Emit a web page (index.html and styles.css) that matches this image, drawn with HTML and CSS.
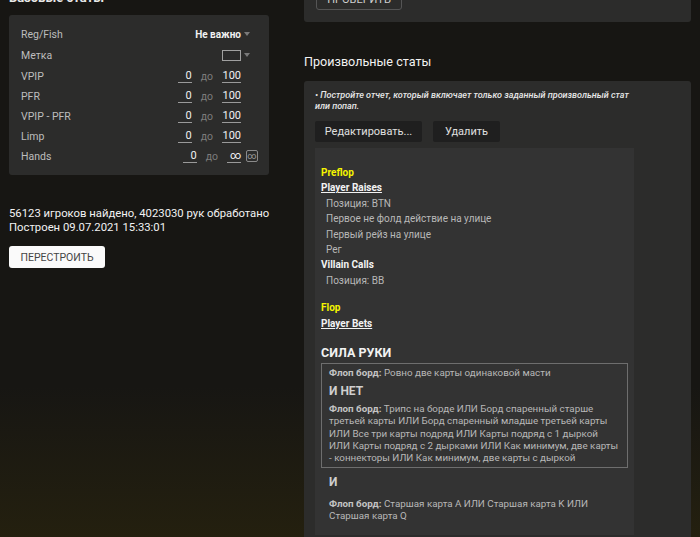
FILE: index.html
```html
<!DOCTYPE html>
<html lang="ru">
<head>
<meta charset="utf-8">
<title>Статы</title>
<link rel="stylesheet" href="styles.css">
</head>
<body>
<div class="page">
  <div class="left">
    <div class="h-cut">Базовые статы</div>
    <div class="panel">
      <div class="row first">
        <span class="lbl">Reg/Fish</span>
        <span class="sel">Не важно</span>
        <span class="slot"><span class="tri"></span></span>
      </div>
      <div class="row tall">
        <span class="lbl">Метка</span>
        <span class="swatch"></span>
        <span class="slot"><span class="tri"></span></span>
      </div>
      <div class="row">
        <span class="lbl">VPIP</span>
        <span class="num n-min">0</span><span class="to">до</span><span class="num n-max">100</span>
        <span class="slot"></span>
      </div>
      <div class="row">
        <span class="lbl">PFR</span>
        <span class="num n-min">0</span><span class="to">до</span><span class="num n-max">100</span>
        <span class="slot"></span>
      </div>
      <div class="row">
        <span class="lbl">VPIP - PFR</span>
        <span class="num n-min">0</span><span class="to">до</span><span class="num n-max">100</span>
        <span class="slot"></span>
      </div>
      <div class="row">
        <span class="lbl">Limp</span>
        <span class="num n-min">0</span><span class="to">до</span><span class="num n-max">100</span>
        <span class="slot"></span>
      </div>
      <div class="row">
        <span class="lbl">Hands</span>
        <span class="num n-min">0</span><span class="to">до</span><span class="num n-inf">∞</span>
        <span class="slot"><span class="inf-btn">∞</span></span>
      </div>
    </div>
    <div class="summary">
      <div>56123 игроков найдено, 4023030 рук обработано</div>
      <div>Построен 09.07.2021 15:33:01</div>
    </div>
    <button class="rebuild">ПЕРЕСТРОИТЬ</button>
  </div>

  <div class="right">
    <div class="panel-top">
      <button class="check">ПРОВЕРИТЬ</button>
    </div>
    <div class="h2">Произвольные статы</div>
    <div class="panel2">
      <div class="note">• Постройте отчет, который включает только заданный произвольный стат или попап.</div>
      <div class="btns">
        <button class="dark-btn edit">Редактировать...</button>
        <button class="dark-btn del">Удалить</button>
      </div>
      <div class="stat">
        <div class="street">Preflop</div>
        <div class="actor">Player Raises</div>
        <div class="item">Позиция: BTN</div>
        <div class="item">Первое не фолд действие на улице</div>
        <div class="item">Первый рейз на улице</div>
        <div class="item">Рег</div>
        <div class="actor plain">Villain Calls</div>
        <div class="item">Позиция: BB</div>
        <div class="street gap">Flop</div>
        <div class="actor">Player Bets</div>
        <div class="strength">СИЛА РУКИ</div>
        <div class="cond-box">
          <div class="cond"><b>Флоп борд:</b> Ровно две карты одинаковой масти</div>
          <div class="op">И НЕТ</div>
          <div class="cond"><b>Флоп борд:</b> Трипс на борде ИЛИ Борд спаренный старше<br>третьей карты ИЛИ Борд спаренный младше третьей карты<br>ИЛИ Все три карты подряд ИЛИ Карты подряд с 1 дыркой<br>ИЛИ Карты подряд с 2 дырками ИЛИ Как минимум, две карты<br>- коннекторы ИЛИ Как минимум, две карты с дыркой</div>
        </div>
        <div class="op outer">И</div>
        <div class="cond outer-cond"><b>Флоп борд:</b> Старшая карта A ИЛИ Старшая карта K ИЛИ<br>Старшая карта Q</div>
      </div>
    </div>
  </div>
</div>
</body>
</html>
```

FILE: styles.css
```css
html, body {
  margin: 0;
  padding: 0;
}
body {
  width: 700px;
  height: 537px;
  overflow: hidden;
  background: linear-gradient(to bottom, #171613 0%, #171613 72%, #24200f 100%);
  font-family: Roboto, "Liberation Sans", Arial, sans-serif;
  color: #e6e6e6;
}
.page {
  display: flex;
  align-items: flex-start;
}
.left {
  width: 260px;
  margin-left: 9px;
  flex: none;
}
.h-cut {
  margin-top: -10px;
  height: 16px;
  line-height: 16px;
  font-size: 13px;
  font-weight: 700;
  color: #e8e8e8;
  margin-bottom: 9px;
}
.panel {
  background: #2c2c2b;
  border-radius: 3px;
  padding: 9px 11px 9px 12px;
}
.row {
  display: flex;
  align-items: center;
  height: 20px;
  font-size: 10.5px;
}
.row.tall { height: 22px; }
.lbl {
  flex: 1;
  color: #bdbdbd;
}
.sel {
  color: #f2f2f2;
  font-weight: 700;
  font-size: 10px;
}
.slot {
  width: 17px;
  display: flex;
  justify-content: flex-end;
  align-items: center;
}
.tri {
  width: 0;
  height: 0;
  border-left: 3.5px solid transparent;
  border-right: 3.5px solid transparent;
  border-top: 4px solid #7a7a7a;
  margin-right: 8px;
}
.swatch {
  width: 17px;
  height: 9px;
  border: 1px solid #a0a0a0;
  background: #2a2a2a;
}
.num {
  text-align: right;
  color: #f0f0f0;
  font-size: 11px;
  line-height: 13px;
  border-bottom: 1px solid #9a9a9a;
}
.n-min { width: 14px; }
.n-max { width: 19px; }
.n-inf { width: 14px; }
.to {
  color: #7c7c7c;
  margin: 0 9px;
  font-size: 10.5px;
}
.inf-btn {
  width: 10px;
  height: 10px;
  border: 1px solid #8a8a8a;
  border-radius: 2px;
  color: #9a9a9a;
  font-size: 9px;
  line-height: 10px;
  text-align: center;
}
.summary {
  margin-top: 32px;
  font-size: 11.3px;
  line-height: 14px;
  color: #f2f2f2;
  white-space: nowrap;
}
.rebuild {
  margin-top: 11px;
  width: 96px;
  height: 22px;
  background: #fafafa;
  color: #454545;
  border: none;
  border-radius: 3px;
  font-family: inherit;
  font-size: 10.5px;
  padding: 0;
}
.right {
  margin-left: 35px;
  width: 387px;
  flex: none;
}
.panel-top {
  margin-top: -12px;
  background: #2c2c2b;
  border-radius: 0 0 3px 3px;
  padding: 0 12px 12px 12px;
}
.check {
  display: block;
  width: 86px;
  height: 22px;
  background: transparent;
  border: 1px solid #555;
  border-radius: 3px;
  color: #cfcfcf;
  font-family: inherit;
  font-size: 11px;
  padding: 0;
}
.h2 {
  margin-top: 31px;
  margin-bottom: 10px;
  height: 18px;
  line-height: 18px;
  font-size: 12.6px;
  color: #f2f2f2;
}
.panel2 {
  background: #2c2c2b;
  border-radius: 3px;
  padding: 9px 11px 20px 11px;
}
.note {
  width: 319px;
  font-size: 9px;
  line-height: 11px;
  font-style: italic;
  font-weight: 500;
  color: #e6e6e6;
}
.btns {
  display: flex;
  gap: 11px;
  margin-top: 9px;
}
.dark-btn {
  height: 21px;
  background: #1f1f1f;
  border: none;
  border-radius: 2px;
  color: #e0e0e0;
  font-family: inherit;
  font-size: 11px;
  padding: 0;
}
.edit { width: 107px; }
.del { width: 67px; }
.stat {
  margin-top: 6px;
  width: 319px;
  box-sizing: border-box;
  background: #333333;
  padding: 17px 6px 12px 6px;
  font-size: 10px;
  line-height: 15.4px;
}
.street {
  color: #f5f500;
  font-weight: 700;
}
.street.gap { margin-top: 12px; }
.actor {
  color: #f2f2f2;
  font-weight: 700;
  text-decoration: underline;
}
.actor.plain { text-decoration: none; }
.item {
  color: #b8b8b8;
  padding-left: 5px;
}
.strength {
  margin-top: 14px;
  font-size: 12.5px;
  font-weight: 700;
  color: #f2f2f2;
  line-height: 16px;
}
.cond-box {
  margin-top: 2px;
  border: 1px solid #6e6e6e;
  padding: 3px 2px 3px 7px;
}
.cond {
  font-size: 9.8px;
  line-height: 12.2px;
  color: #b8b8b8;
  white-space: nowrap;
}
.cond b {
  color: #c4c4c4;
  font-weight: 700;
}
.op {
  font-size: 12px;
  font-weight: 700;
  color: #cfcfcf;
  line-height: 14px;
  margin: 5px 0 5px 0;
}
.op.outer {
  margin: 7px 0 9px 8px;
}
.outer-cond {
  padding-left: 8px;
}
```
